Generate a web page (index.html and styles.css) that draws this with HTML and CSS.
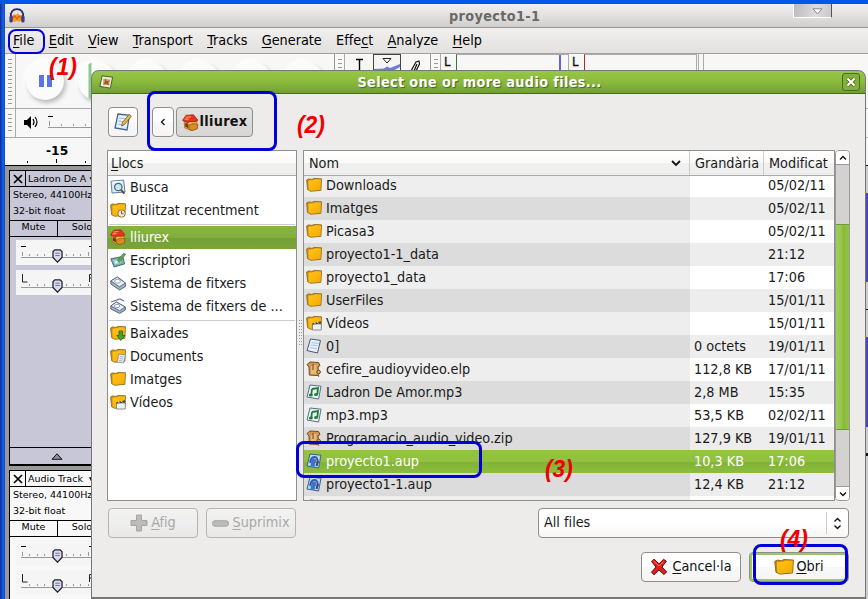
FILE: index.html
```
<!DOCTYPE html>
<html lang="ca">
<head>
<meta charset="utf-8">
<title>proyecto1-1</title>
<link rel="stylesheet" href="styles.css">
</head>
<body>
<svg class="defs" width="0" height="0">
  <defs>
    <linearGradient id="gold" x1="0" y1="0" x2="1" y2="1"><stop offset="0" stop-color="#ffc61c"/><stop offset="1" stop-color="#f6a800"/></linearGradient>
    <symbol id="folder" viewBox="0 0 16 16"><path d="M.6 3 2.500 1.900l3.500.5 2-1 7.500.4-.6 11.500-10 1-3.300-1.600z" fill="#c98a08" stroke="#8a6420" stroke-width=".8"/><path d="M2.400 3.700 8 3.100l1-.8 6 .2-.5 10.300-9.600 1-2.300-1z" fill="url(#gold)"/></symbol>
    <symbol id="recent" viewBox="0 0 16 16"><use href="#folder"/><circle cx="11.5" cy="11.5" r="3.7" fill="#f5ead2" stroke="#b06a20"/><path d="M11.5 9v2.7h2" fill="none" stroke="#555" stroke-width=".9"/></symbol>
    <symbol id="download" viewBox="0 0 16 16"><use href="#folder"/><path d="M9 6h3.5v4.5H15l-4.2 5-4-5H9z" fill="#3eaa28" stroke="#16651a" stroke-width=".8"/></symbol>
    <symbol id="docs" viewBox="0 0 16 16"><use href="#folder"/><path d="m9 6 6.500 1-2 8-6.500-1z" fill="#eef2f8" stroke="#7c8794" stroke-width=".8"/><path d="m10 8.500 3.500.5m-4 1.500 3.500.5m-4 1.500 3.500.5" stroke="#95a1b4" stroke-width=".8"/></symbol>
    <symbol id="video" viewBox="0 0 16 16"><use href="#folder"/><path d="M6.5 9h8.8v6H6.5z" fill="#f0f2f4" stroke="#777" stroke-width=".8"/><path d="m6 8.5 9-2.2.4 2.2-9 1z" fill="#444"/><path d="m8 7.7 1.5 1M11 7l1.600 1.200" stroke="#eee"/></symbol>
    <symbol id="sheet" viewBox="0 0 16 16"><path d="m4.500 1 10 1.400L11.500 15 1 12.600z" fill="#e7f0fb" stroke="#495c78"/><path d="m5.500 4.500 7 1m-7.600 1.400 7 1M4 9.600l7 1" stroke="#a9c2e2"/></symbol>
    <symbol id="audio" viewBox="0 0 16 16"><path d="m4 1 11 1.2L12.6 15 1 13z" fill="#eaf3f6" stroke="#55708c"/><path d="m6 5 6-1-.7 6.3M6 5l-.7 6" fill="none" stroke="#247936" stroke-width="1.800"/><ellipse cx="4.8" cy="11" rx="2" ry="1.500" fill="#247936"/><ellipse cx="10" cy="10.6" rx="2" ry="1.500" fill="#247936"/></symbol>
    <symbol id="zip" viewBox="0 0 16 16"><path d="M1 3.5 4 1l8.5.5 1.5 3-2 1.3.6 8.700-9.300-.4L3 6z" fill="#cf9655" stroke="#74491d"/><path d="m5 5 5.5-1.6v9.8L4.8 13z" fill="#e9b877"/><path d="M7 3v6" stroke="#70451a"/><circle cx="12.6" cy="11" r="1.8" fill="#d7a765" stroke="#71501f"/><path d="M12.6 13v3" stroke="#777"/></symbol>
    <symbol id="aup" viewBox="0 0 16 16"><path d="m4 1 11 1.2L12.6 15 1 13z" fill="#b9d6ef" stroke="#495d7a"/><path d="M4.5 10c-.5-3 1.500-6 4-6s3.700 3 2.800 6" fill="none" stroke="#2860b3" stroke-width="2"/><path d="m6 5 4 1-1.500 8-4-1z" fill="#2d78d4"/><path d="m9 6 .5 4" stroke="#e3432f"/><path d="m12 8-1.500 5" stroke="#1e4b98" stroke-width="2"/></symbol>
    <symbol id="search" viewBox="0 0 16 16"><path d="M1 2.2 13.6 1l1.400 12L2 14z" fill="#dcecf8" stroke="#647f9e"/><path d="m2.500 3.500 9-1" stroke="#fff" stroke-width="1.500"/><circle cx="8.300" cy="8" r="3.700" fill="#c3ebef" stroke="#45617a" stroke-width="1.200"/><path d="m11 10.800 3.400 3.800" stroke="#6c4a34" stroke-width="2"/></symbol>
    <symbol id="home" viewBox="0 0 16 16"><path d="m2 6 .5 7 6 2.400L14 13V7L8 4z" fill="#f3c250" stroke="#9f5a14" stroke-width=".7"/><path d="M.5 6 3.800 1.200l7-.4 4.200 5-2 1.400H7L6 8.500z" fill="#e5341d" stroke="#96220e" stroke-width=".7"/><path d="m3.500 3 5-.5M2.500 5l4-.3" stroke="#ffac82"/><path d="m3 8 3 1.300v4L3 12z" fill="#763d12"/><path d="m6.500 10.500 4-1.500 4.500.8-.6 4.200-5 1.700-3-1.500z" fill="#d98b25" stroke="#8b5418" stroke-width=".7"/></symbol>
    <symbol id="desktop" viewBox="0 0 16 16"><path d="m.8 6.800 11.800-2.300 2 7.400L4.200 15z" fill="#73b4a3" stroke="#48616f" stroke-width=".9"/><path d="m3 8.300 7.700-1.600.8 3.800L5 12.700z" fill="#a9d9e8"/><path d="m7 8.500 6.600-7 2 .8-6.200 8z" fill="#60a94c" stroke="#37713b" stroke-width=".7"/><path d="m5.500 11 2-2" stroke="#fff" stroke-width="1.500"/></symbol>
    <symbol id="drive" viewBox="0 0 16 16"><path d="m.8 6 6.500-4L15.400 8v3.500L9.600 15 .8 9z" fill="#a6b2c8" stroke="#4c5b75" stroke-width=".9"/><path d="m.8 6 6.500-4L15.400 8l-6 3.800z" fill="#e6edf6" stroke="#4c5b75" stroke-width=".8"/><ellipse cx="7.500" cy="6.200" rx="3" ry="1.900" fill="#fff" stroke="#8491a5" stroke-width=".8"/></symbol>
    <symbol id="drive2" viewBox="0 0 16 16"><path d="m1 4 9-3 4 2" fill="none" stroke="#66768c" stroke-width="1.300"/><path d="m.8 8 5.500-4 9 5v3L9.600 15.400.8 11z" fill="#a6b2c8" stroke="#4c5b75" stroke-width=".9"/><path d="m.8 8 5.500-4 9 5-5.700 3.700z" fill="#e6edf6" stroke="#4c5b75" stroke-width=".8"/><ellipse cx="7" cy="8" rx="2.800" ry="1.600" fill="#fff" stroke="#8491a5" stroke-width=".8"/></symbol>
    <symbol id="thumb" viewBox="0 0 10 13"><path d="M2.500.8h5L9.200 2.500v5.300L5 12.200.8 7.800V2.500z" fill="#d9d9ee" stroke="#20242c" stroke-width="1.200"/><path d="M3 4h4M3 6h4" stroke="#77779b"/></symbol>
    <symbol id="edit" viewBox="0 0 20 20"><path d="m5 2 11.500 1.300L14 18 2 16z" fill="#e4eff9" stroke="#45658a" stroke-width="1.300"/><path d="m6 6 7.500 1m-8.200 2 7 1m-7.600 2 6 1" stroke="#9ec0e0"/><path d="m8.500 14 1-3.500 6.500-8 2.300 1.800-6.600 8z" fill="#eabb43" stroke="#6d542a" stroke-width=".8"/></symbol>
  </defs>
</svg>

<div class="desktop">
  <div class="main">
    <div class="main-title">
      <svg class="app-icon" viewBox="0 0 16 16"><path d="M2 9C1 4 4 1.200 8 1.200S15 4 14 9" fill="none" stroke="#27246d" stroke-width="1.800"/><path d="m3 8 2-2 2 1 1.500-2L10 7h3v5l-3 2-2-1-3 1-2-2z" fill="#f79b20"/><path d="m4 10 2-2 2 3 2-3 2 2" fill="none" stroke="#dd5d18" stroke-width="1.200"/><rect x=".4" y="7.500" width="3.400" height="7" rx="1.600" fill="#3e3d94"/><rect x="12.200" y="7.500" width="3.400" height="7" rx="1.600" fill="#3e3d94"/></svg>
      <span>proyecto1-1</span>
    </div>
    <div class="menubar">
      <span><u>F</u>ile</span><span><u>E</u>dit</span><span><u>V</u>iew</span><span><u>T</u>ransport</span><span><u>T</u>racks</span><span><u>G</u>enerate</span><span>Effe<u>c</u>t</span><span><u>A</u>nalyze</span><span><u>H</u>elp</span>
    </div>
    <div class="toolbar">
      <div class="grip"></div>
      <div class="transport">
        <div class="round"><i></i><i></i></div><div class="round play"></div><div class="round"></div><div class="round"></div><div class="round"></div><div class="round"></div>
      </div>
      <div class="grip narrow"></div>
      <div class="tool"><svg width="9" height="12" viewBox="0 0 9 12"><path d="M1 1.500h7M4.500 1v11" stroke="#000" stroke-width="1.400"/></svg></div>
      <div class="tool on"><svg width="26" height="14" viewBox="0 0 26 14"><path d="M9 .5h8L13 5z" fill="#fff" stroke="#222"/><path d="M0 14v-3l10-.5 3-2 3 1.500 10-4v3l-9 5z" fill="#7379d8"/></svg></div>
      <div class="tool"><svg width="14" height="13" viewBox="0 0 14 13"><path d="M3 13 8 4l3-1 .5 3L8 13M6 13l3-7" fill="none" stroke="#111" stroke-width="1.200"/></svg></div>
      <div class="grip narrow"></div>
      <div class="meter green"><b>L</b><span></span></div>
      <div class="meter red"><b>L</b><span></span></div>
      <div class="bars"></div>
    </div>
    <div class="mixer">
      <div class="grip"></div>
      <svg width="78" height="26" viewBox="0 0 78 26"><path d="M7 11h3l4-4v13l-4-4H7z"/><path d="M16 10q2 3 0 6m2-8q4 5 0 10" fill="none" stroke="#000" stroke-width="1.200"/><path d="M31 7.500h5" stroke="#000"/><path d="M31 18.500h47M32.500 12v5M44.500 15v2M56.500 15v2M68.500 15v2" stroke="#999"/></svg>
    </div>
    <div class="ruler"><b>-15</b><svg width="86" height="4" viewBox="0 0 86 4"><path d="M22.500 2v2M51.500 0v4M80.500 2v2" stroke="#000"/></svg></div>
    <div class="tracks">
      <div class="track selected">
        <div class="t-head"><svg width="15" height="16" viewBox="0 0 15 16"><path d="m4 4 8 8m0-8-8 8" stroke="#000" stroke-width="1.700"/></svg><span>Ladron De A ▾</span></div>
        <div class="t-info">Stereo, 44100Hz<br>32-bit float</div>
        <div class="t-btns"><span>Mute</span><span>Solo</span></div>
        <div class="slider"><svg width="76" height="25" viewBox="0 0 76 25"><path d="M5 6.500h5M73 6.500h3" stroke="#000"/><path d="M5 17.500h71M6.500 12v4M13.500 14v2M21.500 14v2M28.500 14v2M50.500 14v2M57.500 14v2M64.500 14v2M72.500 12v4" stroke="#999"/><use href="#thumb" x="36" y="9" width="11" height="14"/></svg></div>
        <div class="slider"><svg width="76" height="25" viewBox="0 0 76 25"><path d="M6.500 4v8h5M73.500 12V4.500h2.500M73.500 8h2" fill="none" stroke="#222"/><path d="M5 17.500h71M13.500 14v2M21.500 14v2M28.500 14v2M50.500 14v2M57.500 14v2M64.500 14v2M72.500 14v2" stroke="#999"/><use href="#thumb" x="36" y="9" width="11" height="14"/></svg></div>
        <div class="t-foot"><svg width="12" height="7" viewBox="0 0 12 7"><path d="M6 .8 11 6.300H1z" fill="#8c8c9c" stroke="#111"/></svg></div>
      </div>
      <div class="track">
        <div class="t-head"><svg width="15" height="16" viewBox="0 0 15 16"><path d="m4 4 8 8m0-8-8 8" stroke="#000" stroke-width="1.700"/></svg><span>Audio Track &nbsp;▾</span></div>
        <div class="t-info">Stereo, 44100Hz<br>32-bit float</div>
        <div class="t-btns"><span>Mute</span><span>Solo</span></div>
        <div class="slider"><svg width="76" height="25" viewBox="0 0 76 25"><path d="M5 6.500h5M73 6.500h3" stroke="#000"/><path d="M5 17.500h71M6.500 12v4M13.500 14v2M21.500 14v2M28.500 14v2M50.500 14v2M57.500 14v2M64.500 14v2M72.500 12v4" stroke="#999"/><use href="#thumb" x="36" y="9" width="11" height="14"/></svg></div>
        <div class="slider"><svg width="76" height="25" viewBox="0 0 76 25"><path d="M6.500 4v8h5M73.500 12V4.500h2.500M73.500 8h2" fill="none" stroke="#222"/><path d="M5 17.500h71M13.500 14v2M21.500 14v2M28.500 14v2M50.500 14v2M57.500 14v2M64.500 14v2M72.500 14v2" stroke="#999"/><use href="#thumb" x="36" y="9" width="11" height="14"/></svg></div>
      </div>
      <div class="waves"></div>
    </div>
  </div>
</div>
<div class="tab"><svg width="11" height="7" viewBox="0 0 11 7"><path d="M1 .8h9L5.500 6z" fill="#fff" stroke="#888"/></svg></div>

<div class="dialog">
  <div class="d-title">
    <svg width="14" height="14" viewBox="0 0 16 16"><path d="m3.500 1 12 1.500L13 15 1 13z" fill="#f0f0dd" stroke="#38501e"/><path d="m5 4 8 1-1.500 7-7-1z" fill="#a9bd68"/><path d="m7 4 2 3 3-1-1.500 3L12 12 8.500 10 5 11l1.500-3z" fill="#c94425"/></svg>
    <span>Select one or more audio files...</span>
    <div class="close"><svg width="10" height="10" viewBox="0 0 10 10"><path d="m1.500 1.500 7 7m0-7-7 7" stroke="#3f6412" stroke-width="3.600"/><path d="m1.500 1.500 7 7m0-7-7 7" stroke="#fff" stroke-width="2.200"/></svg></div>
  </div>
  <div class="path">
    <div class="btn type"><svg width="20" height="20"><use href="#edit"/></svg></div>
    <div class="btn back"><svg width="6" height="8" viewBox="0 0 6 8"><path d="M4.500 1 1.500 4l3 3" fill="none" stroke="#111" stroke-width="1.300"/></svg></div>
    <div class="btn crumb"><svg width="17" height="17"><use href="#home"/></svg><b>lliurex</b></div>
  </div>
  <div class="panes">
    <div class="places">
      <div class="p-head"><span><u>L</u>locs</span></div>
      <div class="p"><svg><use href="#search"/></svg>Busca</div>
      <div class="p"><svg><use href="#recent"/></svg>Utilitzat recentment</div>
      <hr>
      <div class="p active"><svg><use href="#home"/></svg>lliurex</div>
      <div class="p"><svg><use href="#desktop"/></svg>Escriptori</div>
      <div class="p"><svg><use href="#drive"/></svg>Sistema de fitxers</div>
      <div class="p"><svg><use href="#drive2"/></svg>Sistema de fitxers de ...</div>
      <hr>
      <div class="p"><svg><use href="#download"/></svg>Baixades</div>
      <div class="p"><svg><use href="#docs"/></svg>Documents</div>
      <div class="p"><svg><use href="#folder"/></svg>Imatges</div>
      <div class="p"><svg><use href="#video"/></svg>Vídeos</div>
    </div>
    <div class="splitter"></div>
    <div class="files">
      <div class="f-head"><div><span>Nom</span><svg width="10" height="7" viewBox="0 0 10 7"><path d="m1 1 4 4 4-4" fill="none" stroke="#111" stroke-width="1.800"/></svg></div><div><span>Grandària</span></div><div><span>Modificat</span></div></div>
      <div class="rows">
        <div class="f"><span><svg><use href="#folder"/></svg>Downloads</span><span></span><span>05/02/11</span></div>
        <div class="f"><span><svg><use href="#folder"/></svg>Imatges</span><span></span><span>05/02/11</span></div>
        <div class="f"><span><svg><use href="#folder"/></svg>Picasa3</span><span></span><span>05/02/11</span></div>
        <div class="f"><span><svg><use href="#folder"/></svg>proyecto1-1_data</span><span></span><span>21:12</span></div>
        <div class="f"><span><svg><use href="#folder"/></svg>proyecto1_data</span><span></span><span>17:06</span></div>
        <div class="f"><span><svg><use href="#folder"/></svg>UserFiles</span><span></span><span>15/01/11</span></div>
        <div class="f"><span><svg><use href="#video"/></svg>Vídeos</span><span></span><span>15/01/11</span></div>
        <div class="f"><span><svg><use href="#sheet"/></svg>0]</span><span>0 octets</span><span>19/01/11</span></div>
        <div class="f"><span><svg><use href="#zip"/></svg>cefire_audioyvideo.elp</span><span>112,8 KB</span><span>17/01/11</span></div>
        <div class="f"><span><svg><use href="#audio"/></svg>Ladron De Amor.mp3</span><span>2,8 MB</span><span>15:35</span></div>
        <div class="f"><span><svg><use href="#audio"/></svg>mp3.mp3</span><span>53,5 KB</span><span>02/02/11</span></div>
        <div class="f"><span><svg><use href="#zip"/></svg>Programacio_audio_video.zip</span><span>127,9 KB</span><span>19/01/11</span></div>
        <div class="f active"><span><svg><use href="#aup"/></svg>proyecto1.aup</span><span>10,3 KB</span><span>17:06</span></div>
        <div class="f"><span><svg><use href="#aup"/></svg>proyecto1-1.aup</span><span>12,4 KB</span><span>21:12</span></div>
        <div class="f"><span><svg><use href="#sheet"/></svg></span><span></span><span></span></div>
      </div>
    </div>
    <div class="scroll">
      <div class="arrow"><svg width="8" height="6" viewBox="0 0 8 6"><path d="m1 4.500 3-3 3 3" fill="none" stroke="#111" stroke-width="1.400"/></svg></div>
      <div class="thumb"></div>
      <div class="arrow down"><svg width="8" height="6" viewBox="0 0 8 6"><path d="m1 1.500 3 3 3-3" fill="none" stroke="#111" stroke-width="1.400"/></svg></div>
    </div>
  </div>
  <div class="controls">
    <div class="btn off"><svg width="18" height="18" viewBox="0 0 18 18"><path d="M6.500 1h5v5.500H17v5h-5.500V17h-5v-5.500H1v-5h5.500z" fill="#bcbbba" stroke="#a5a4a3"/></svg><span><u>A</u>fig</span></div>
    <div class="btn off"><svg width="17" height="7" viewBox="0 0 17 7"><rect x=".5" y=".7" width="16" height="5.500" rx="2.500" fill="#bcbbba" stroke="#a5a4a3"/></svg><span><u>S</u>uprimix</span></div>
    <div class="combo"><span>All files</span><i><svg width="9" height="13" viewBox="0 0 9 13"><path d="m1.500 4.500 3-3 3 3m-6 4 3 3 3-3" fill="none" stroke="#111" stroke-width="1.400"/></svg></i></div>
  </div>
  <div class="actions">
    <div class="btn"><svg width="18" height="18" viewBox="0 0 18 18"><path d="M1.500 3.500 4 1.200l5 4.600 4.600-4.500 2.800 1.900L12 9l4.700 5-2.900 2.500L9 12l-5 4.800-2.600-2.500L6 9z" fill="#d8221c" stroke="#790d0a"/><path d="m3.500 3 5.500 5 4.500-4.500" fill="none" stroke="#f77a68"/></svg><span><u>C</u>ancel·la</span></div>
    <div class="btn default"><svg width="20" height="18" viewBox="0 0 16 16" preserveAspectRatio="none"><use href="#folder" width="16" height="16"/></svg><span><u>O</u>bri</span></div>
  </div>
</div>

<div class="mark m1"></div><div class="mark m2"></div><div class="mark m3"></div><div class="mark m4"></div>
<div class="num n1">(1)</div><div class="num n2">(2)</div><div class="num n3">(3)</div><div class="num n4">(4)</div>
</body>
</html>
```
FILE: styles.css
```
* { box-sizing: border-box; }
body { margin: 0; width: 868px; height: 599px; overflow: hidden; position: relative; font: 14.3px "DejaVu Sans Condensed", "DejaVu Sans", sans-serif; font-stretch: condensed; color: #1a1a1a; background: #ececea; }
svg { display: block; flex: none; }
u { text-decoration: underline; text-underline-offset: 2px; text-decoration-thickness: 1px; }
.defs { position: absolute; }

.desktop { height: 599px; padding: 4px 0 0 5px; background: linear-gradient(#0058e6 0 4px, transparent 4px), linear-gradient(90deg, #0a2a8c 0, #1650d8 2px, #1760ee 4px, #0b3cb0 5px); overflow: hidden; }
.main { background: #f7f7f7; height: 595px; }
.main-title { height: 24px; display: flex; align-items: center; padding-left: 4px; background: linear-gradient(#f1f0f0, #e2e1e0 50%, #cfcecd); border-bottom: 1px solid #979797; }
.app-icon { width: 16px; height: 16px; }
.main-title span { font-weight: bold; color: #6a6967; margin-left: 424px; white-space: nowrap; letter-spacing: .35px; }
.menubar { height: 26px; display: flex; align-items: center; gap: 14.300px; padding: 0 0 2px 8px; background: linear-gradient(#f0efee, #e2e1e0); border-bottom: 1px solid #a2a2a2; color: #000; }
.toolbar { height: 55px; display: flex; border-bottom: 1px solid #aaa; }
.grip { width: 11px; flex: none; border-right: 1px solid #aaa; background: repeating-linear-gradient(#999 0 1px, transparent 1px 4px) 3px 5px / 4px 45px no-repeat; }
.grip.narrow { border-left: 1px solid #999; margin-left: 1px; }
.transport { width: 317px; display: flex; padding-left: 10px; gap: 14px; overflow: hidden; }
.round { width: 38px; height: 38px; margin-top: 8px; border-radius: 50%; flex: none; background: #fbfbfb; box-shadow: 2px 3px 4px #bbb, -2px -2px 4px #fff; display: flex; align-items: center; justify-content: center; gap: 3px; }
.round i { width: 5px; height: 12px; background: #5a74e8; }
.round.play { background: linear-gradient(90deg, #fbfbfb 10px, #8cca8c 11px 13px, #fbfbfb 14px); }
.tool { width: 28px; height: 20px; padding-top: 4px; display: flex; justify-content: center; }
.tool.on { border: 1px solid #444; background: #f4f4f4; padding-top: 3px; }
.meter { display: flex; height: 17px; width: 128px; }
.meter b { width: 15px; padding-left: 3px; font-size: 13px; font-weight: normal; -webkit-text-stroke: .3px #000; }
.meter span { flex: 1; border: 1px solid #aaa; border-left: 1px solid #2b8032; background: linear-gradient(90deg, transparent 102px, #6060e0 102px 104px, transparent 104px); }
.meter.red span { border-left-color: #9d3327; background: none; }
.bars { width: 6px; margin-left: 1px; border: solid #aaa; border-width: 0 1px; }
.mixer { height: 29px; display: flex; border-bottom: 1px solid #aaa; }
.mixer .grip { background-size: 4px 20px; }
.mixer svg { margin-left: 1px; }
.ruler { height: 27px; display: flex; flex-direction: column; justify-content: space-between; padding: 6px 0 2px; }
.ruler b { font-family: "DejaVu Sans", sans-serif; font-stretch: normal; font-size: 12.300px; padding-left: 41px; line-height: 15px; color: #000; }
.ruler svg { margin-top: -1px; }
.tracks { height: 440px; background: #999; border-top: 1px solid #000; padding: 4px 0 0 4px; position: relative; font-family: "DejaVu Sans", sans-serif; font-stretch: normal; font-size: 9.500px; color: #000; }
.track { width: 120px; background: #f8f8f8; border: 1px solid #000; margin-bottom: 4px; }
.selected { background: #c8c7d8; border-bottom-width: 2px; height: 296px; display: flex; flex-direction: column; }
.t-head { display: flex; height: 16px; border-bottom: 1px solid #000; align-items: center; white-space: nowrap; }
.t-head svg { border-right: 1px solid #000; width: 16px; margin-top: 1px; }
.t-head span { padding: 0 0 1px 2px; }
.t-info { height: 34px; padding-left: 3px; line-height: 16px; border-bottom: 1px solid #000; white-space: nowrap; }
.t-info { line-height: 15.500px; }
.t-btns { display: flex; height: 16px; border-bottom: 1px solid #000; line-height: 12px; }
.t-btns span { width: 48px; text-align: center; border-right: 1px solid #000; }
.t-btns span:last-child { border: 0; }
.slider { margin: 3px 0 5px 6px; background: #f5f5f5; height: 25px; }
.slider + .slider { margin-top: 0; }
.t-foot { margin-top: auto; height: 17px; border-top: 1px solid #000; padding: 5px 0 0 41px; }
.waves { position: absolute; right: 0; top: 0; width: 3px; height: 434px; background: linear-gradient(#ccc 27px, #4444c4 27px 116px, #ccc 116px 143px, #111 143px 144px, #ccc 144px 171px, #4444c4 171px 261px, #ccc 261px 287px, #111 287px 290px, #ccc 290px); }
.tab { position: absolute; left: 793px; top: 4px; width: 39px; height: 14px; border: 1px solid #fff; border-right-color: #555; border-top: 0; background: linear-gradient(100deg, #bbb, #ddd 60%, #c8c8c8); padding: 4px 0 0 18px; }

.dialog { position: absolute; left: 91px; top: 70px; width: 775px; height: 529px; background: #edeceb; border: 1px solid #777; border-bottom: 2px solid #777; border-radius: 8px 8px 0 0; overflow: hidden; }
.d-title { margin: -1px -1px 0; height: 24px; border: 1px solid #456a1c; border-radius: 8px 8px 0 0; background: linear-gradient(#98c646, #8aba3d 50%, #739e35); display: flex; align-items: center; padding: 0 5px 0 7px; }
.d-title span { flex: 1; text-align: center; color: #fff; font-weight: bold; letter-spacing: .36px; padding-left: 4px; text-shadow: 1px 1px 1px #446719; }
.close { width: 18px; height: 18px; border: 1px solid #48701c; border-radius: 3px; display: grid; place-items: center; background: #83b03b; }
.btn { display: flex; align-items: center; justify-content: center; border: 1px solid #8e8e8e; border-radius: 4px; background: linear-gradient(#fff, #fff 50%, #f8f8f8 51%, #f5f5f5); height: 30px; color: #111; white-space: nowrap; }
.btn span, .btn b, .combo span { padding-bottom: 2px; }
.path { display: flex; padding: 13px 0 0 16px; }
.type { width: 30px; }
.back { width: 22px; margin-left: 14px; }
.crumb { width: 77px; margin-left: 2px; background: linear-gradient(#e2e1e0, #d7d6d5); gap: 1px; letter-spacing: .3px; }
.panes { display: flex; height: 351px; margin: 13px 0 0 15px; }
.places { width: 190px; border: 1px solid #8e8e8e; background: #fff; }
.p-head { height: 25px; padding: 0 3px; display: flex; align-items: center; background: linear-gradient(#fff, #f9f9f9 50%, #f0f0ef 52%, #eee); border-bottom: 1px solid #aaa; }
.p { height: 23px; display: flex; align-items: center; gap: 4px; padding: 0 0 1px 2px; white-space: nowrap; }
.p svg, .f svg { width: 16px; height: 16px; }
.p.active { color: #fff; background: linear-gradient(#86b440, #82ae3e 50%, #75a035 52%, #7aa539); }
.places hr { height: 1px; margin: 2px 1px 1px; border: 0; background: #ccc; }
.splitter { width: 6px; background: radial-gradient(circle at 1px 1px, #999 .8px, transparent 1px) 1px 170px / 2px 3px repeat-x; background: repeating-linear-gradient(90deg, #edeceb 0 1px, transparent 1px 2px) 1px 170px / 5px 27px no-repeat, repeating-linear-gradient(#999 0 1px, transparent 1px 3px) 1px 170px / 4px 27px no-repeat; }
.files { width: 532px; border: 1px solid #8e8e8e; background: #fff; overflow: hidden; display: flex; flex-direction: column; }
.f-head { height: 25px; flex: none; display: flex; background: linear-gradient(#fff, #f9f9f9 50%, #f0f0ef 52%, #eee); border-bottom: 1px solid #aaa; }
.f-head div { display: flex; align-items: center; padding-left: 5px; }
.f-head div:nth-child(1) { width: 386px; justify-content: space-between; padding-right: 8px; border-right: 1px solid #ccc; }
.f-head div:nth-child(2) { width: 74px; padding-left: 5px; border-right: 1px solid #ccc; }
.rows { margin-top: -2px; clip-path: inset(2px 0 0); }
.f { height: 23px; display: grid; grid-template-columns: 386px 74px 70px; line-height: 22px; white-space: nowrap; }
.f span { display: flex; align-items: center; gap: 4px; padding: 0 0 1px 4px; }
.f span:first-child { background: #eee; padding-left: 2px; }
.f:nth-child(even) span { background: #ededed; }
.f:nth-child(even) span:first-child { background: #dcdcdc; }
.f.active { color: #fff; background: linear-gradient(#93c542, #8fc03f 50%, #82b236 52%, #8cbd3d); }
.f.active span:first-child { background: none; }
.scroll { width: 15px; background: #d3d2d1; border: 1px solid #999; border-radius: 4px; display: flex; flex-direction: column; overflow: hidden; }
.arrow { height: 14px; background: #fff; border-bottom: 1px solid #999; display: grid; place-items: center; }
.arrow.down { margin-top: auto; border-top: 1px solid #999; border-bottom: 0; }
.scroll .thumb { margin: 59px -1px 0; height: 206px; border: 1px solid #6d993a; background: linear-gradient(90deg, #a0cc5c, #94c748 45%, #88b83b 55%, #92c545); }
.controls { display: flex; padding: 7px 15px 0 16px; }
.off { width: 90px; background: linear-gradient(#f3f2f1, #eee 50%, #e9e8e7); border-color: #b5b4b3; color: #a9a8a7; gap: 3px; margin-right: 8px; }
.combo { margin-left: 234px; width: 311px; height: 30px; border: 1px solid #8e8e8e; border-radius: 4px; background: linear-gradient(#fff 50%, #f5f5f5); display: flex; align-items: center; justify-content: space-between; padding-left: 5px; }
.combo i { width: 22px; height: 22px; border-left: 1px solid #ccc; display: grid; place-items: center; }
.actions { display: flex; justify-content: flex-end; gap: 8px; padding: 14px 16px 0 0; }
.actions .btn { width: 100px; gap: 4px; }
.actions .default { border-color: #8e8e8e; box-shadow: inset 0 0 0 2px #9cc767; gap: 2px; }

.mark { position: absolute; border: 3px solid #0000d8; border-radius: 8px; }
.m1 { left: 8px; top: 29px; width: 37px; height: 25px; border-width: 2.500px; }
.m2 { left: 147px; top: 91px; width: 130px; height: 60px; }
.m3 { left: 296px; top: 441px; width: 186px; height: 37px; }
.m4 { left: 753px; top: 544px; width: 95px; height: 41px; }
.num { position: absolute; font: italic bold 24px "Liberation Sans", Arial, sans-serif; color: #f00000; line-height: 26px; transform: scaleX(.95); transform-origin: left; }
.n1 { left: 49px; top: 54px; }
.n2 { left: 297px; top: 112px; }
.n3 { left: 545px; top: 456px; }
.n4 { left: 780px; top: 526px; }
```
